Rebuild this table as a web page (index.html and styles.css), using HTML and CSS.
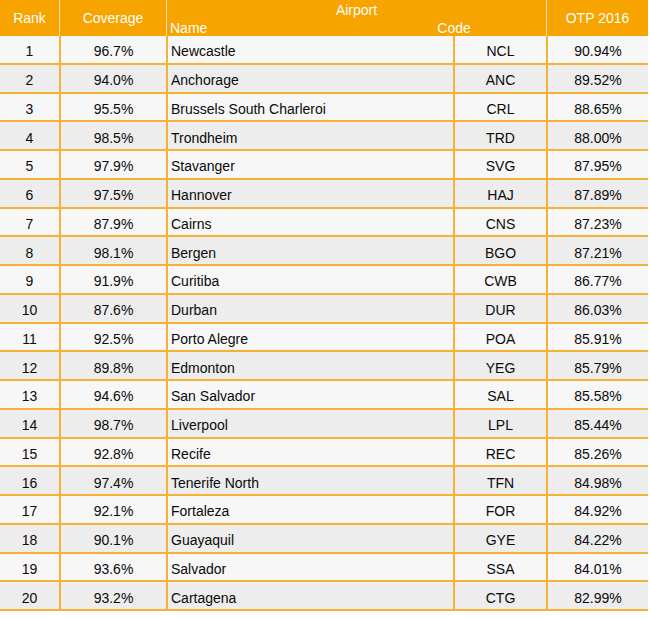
FILE: index.html
```html
<!DOCTYPE html>
<html>
<head>
<meta charset="utf-8">
<link rel="stylesheet" href="styles.css">
</head>
<body>
<table class="otp">
  <colgroup>
    <col class="c-rank"><col class="c-cov"><col class="c-name"><col class="c-code"><col class="c-otp">
  </colgroup>
  <thead>
    <tr>
      <th class="h-rank">Rank</th>
      <th class="h-cov">Coverage</th>
      <th class="h-airport" colspan="2">
        <div class="airport-title">Airport</div>
        <div class="airport-sub"><span>Name</span><span class="sub-code">Code</span></div>
      </th>
      <th class="h-otp">OTP 2016</th>
    </tr>
  </thead>
  <tbody>
    <tr><td>1</td><td>96.7%</td><td class="name">Newcastle</td><td>NCL</td><td>90.94%</td></tr>
    <tr><td>2</td><td>94.0%</td><td class="name">Anchorage</td><td>ANC</td><td>89.52%</td></tr>
    <tr><td>3</td><td>95.5%</td><td class="name">Brussels South Charleroi</td><td>CRL</td><td>88.65%</td></tr>
    <tr><td>4</td><td>98.5%</td><td class="name">Trondheim</td><td>TRD</td><td>88.00%</td></tr>
    <tr><td>5</td><td>97.9%</td><td class="name">Stavanger</td><td>SVG</td><td>87.95%</td></tr>
    <tr><td>6</td><td>97.5%</td><td class="name">Hannover</td><td>HAJ</td><td>87.89%</td></tr>
    <tr><td>7</td><td>87.9%</td><td class="name">Cairns</td><td>CNS</td><td>87.23%</td></tr>
    <tr><td>8</td><td>98.1%</td><td class="name">Bergen</td><td>BGO</td><td>87.21%</td></tr>
    <tr><td>9</td><td>91.9%</td><td class="name">Curitiba</td><td>CWB</td><td>86.77%</td></tr>
    <tr><td>10</td><td>87.6%</td><td class="name">Durban</td><td>DUR</td><td>86.03%</td></tr>
    <tr><td>11</td><td>92.5%</td><td class="name">Porto Alegre</td><td>POA</td><td>85.91%</td></tr>
    <tr><td>12</td><td>89.8%</td><td class="name">Edmonton</td><td>YEG</td><td>85.79%</td></tr>
    <tr><td>13</td><td>94.6%</td><td class="name">San Salvador</td><td>SAL</td><td>85.58%</td></tr>
    <tr><td>14</td><td>98.7%</td><td class="name">Liverpool</td><td>LPL</td><td>85.44%</td></tr>
    <tr><td>15</td><td>92.8%</td><td class="name">Recife</td><td>REC</td><td>85.26%</td></tr>
    <tr><td>16</td><td>97.4%</td><td class="name">Tenerife North</td><td>TFN</td><td>84.98%</td></tr>
    <tr><td>17</td><td>92.1%</td><td class="name">Fortaleza</td><td>FOR</td><td>84.92%</td></tr>
    <tr><td>18</td><td>90.1%</td><td class="name">Guayaquil</td><td>GYE</td><td>84.22%</td></tr>
    <tr><td>19</td><td>93.6%</td><td class="name">Salvador</td><td>SSA</td><td>84.01%</td></tr>
    <tr><td>20</td><td>93.2%</td><td class="name">Cartagena</td><td>CTG</td><td>82.99%</td></tr>
  </tbody>
</table>
</body>
</html>
```
FILE: styles.css
```css
html, body {
  margin: 0;
  padding: 0;
  background: #ffffff;
}

.otp {
  border-collapse: separate;
  border-spacing: 0;
  table-layout: fixed;
  width: 648px;
  font-family: "Liberation Sans", Arial, sans-serif;
  font-size: 14px;
  color: #0a0a0a;
}

.c-rank { width: 59px; }
.c-cov { width: 107px; }
.c-name { width: 287px; }
.c-code { width: 93px; }
.c-otp { width: 102px; }

.otp th {
  background: #f7a300;
  color: #ffffff;
  font-weight: normal;
  height: 36px;
  padding: 0;
  box-sizing: border-box;
  text-align: center;
  vertical-align: middle;
  border-left: 1px solid #fde3b4;
}

.otp th.h-rank {
  border-left: none;
}

.otp th.h-airport {
  text-align: left;
  vertical-align: top;
}

.airport-title {
  text-align: center;
  line-height: 16px;
  padding-top: 2px;
}

.airport-sub {
  display: flex;
  line-height: 16px;
  padding-left: 3px;
  padding-top: 2px;
}

.sub-code {
  margin-left: 230px;
}

.otp td {
  height: 28.75px;
  box-sizing: border-box;
  padding: 4px 0 0 0;
  text-align: center;
  vertical-align: middle;
  border-left: 2px solid #f6b233;
  border-bottom: 2px solid #f6b233;
  white-space: nowrap;
}

.otp td:first-child {
  border-left: none;
}

.otp td.name {
  text-align: left;
  padding-left: 3px;
}

.otp tbody tr:nth-child(odd) td {
  background: #f7f7f7;
}

.otp tbody tr:nth-child(even) td {
  background: #ededed;
}
```
